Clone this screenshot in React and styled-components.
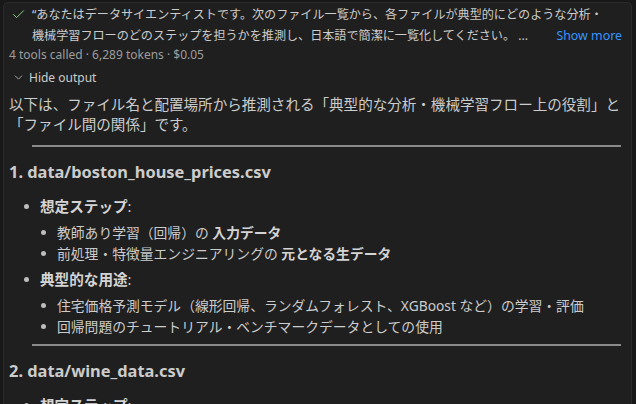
import React from 'react';
import styled, { createGlobalStyle } from 'styled-components';
import { Check, ChevronDown } from 'lucide-react';

const GlobalStyle = createGlobalStyle`
  html, body {
    margin: 0;
    padding: 0;
    background-color: #181818;
    overflow: hidden;
  }
  body {
    font-family: "Noto Sans", "Noto Sans CJK JP", sans-serif;
    color: #cccccc;
  }
`;

const Panel = styled.div`
  margin: 2px 4px 0 3px;
  height: 410px;
  box-sizing: border-box;
  background-color: #1f1f1f;
  border: 1px solid #2b2b2b;
  border-bottom: none;
  border-radius: 5px 5px 0 0;
  padding: 1px 5px 0 5px;
  overflow: clip;
`;

const PromptRow = styled.div`
  display: grid;
  grid-template-columns: 23px minmax(0, 1fr);
  align-items: start;
`;

const CheckBox = styled.div`
  height: 21px;
  display: flex;
  align-items: center;
  padding-left: 2px;
  color: #89d185;
`;

const PromptText = styled.div`
  font-size: 12.1px;
  line-height: 21px;
  color: #cccccc;
  white-space: nowrap;
  min-width: 0;
`;

const PromptLine = styled.div`
  display: flex;
  align-items: baseline;
`;

const ShowMore = styled.a`
  margin-left: auto;
  margin-right: 4px;
  color: #3794ff;
  font-size: 12.4px;
  cursor: pointer;
`;

const Meta = styled.div`
  font-size: 12px;
  line-height: 17px;
  color: #9d9d9d;
`;

const Toggle = styled.div`
  display: flex;
  align-items: center;
  gap: 4px;
  margin-top: 3px;
  height: 22px;
  font-size: 12px;
  color: #cccccc;
  padding-left: 3px;
  svg {
    color: #bbbbbb;
  }
`;

const Body = styled.div`
  padding-top: 6px;
`;

const Para = styled.p`
  margin: 0;
  font-size: 14.55px;
  line-height: 20px;
  color: #cccccc;
  white-space: nowrap;
`;

const Rule = styled.hr`
  margin: ${(p) => (p.$afterList ? '7px' : '11px')} 5px 0 23px;
  border: none;
  height: 2px;
  background-color: #8a8a8a;
`;

const Heading = styled.h2`
  margin: 13px 0 0 0;
  font-size: 16.4px;
  line-height: 24px;
  font-weight: 700;
  color: #cccccc;
`;

const List = styled.ul`
  list-style: none;
  margin: ${(p) => (p.$nested ? '5px 0 0 0' : '11px 0 0 0')};
  padding: 0 0 0 ${(p) => (p.$nested ? '17px' : '15px')};
  display: flex;
  flex-direction: column;
  gap: ${(p) => (p.$nested ? '0' : '4px')};
`;

const Item = styled.li`
  font-size: ${(p) => (p.$nested ? '13.8px' : '14.6px')};
  line-height: ${(p) => (p.$nested ? '21px' : '22px')};
  white-space: nowrap;
`;

const ItemRow = styled.div`
  display: flex;
  align-items: center;
`;

const Dot = styled.span`
  width: 5px;
  height: 5px;
  border-radius: 50%;
  background-color: #bdbdbd;
  margin-right: 11px;
  flex-shrink: 0;
`;

const Strong = styled.strong`
  font-weight: 700;
  color: #d4d4d4;
`;

function Bullet({ nested, children, sub }) {
  return (
    <Item $nested={nested}>
      <ItemRow>
        <Dot />
        <span>{children}</span>
      </ItemRow>
      {sub}
    </Item>
  );
}

export default function App() {
  return (
    <>
      <GlobalStyle />
      <Panel>
        <PromptRow>
          <CheckBox>
            <Check size={15} strokeWidth={1.6} />
          </CheckBox>
          <PromptText>
            <PromptLine>
              “あなたはデータサイエンティストです。次のファイル一覧から、各ファイルが典型的にどのような分析・
            </PromptLine>
            <PromptLine>
              機械学習フローのどのステップを担うかを推測し、日本語で簡潔に一覧化してください。&nbsp;...
              <ShowMore>Show more</ShowMore>
            </PromptLine>
          </PromptText>
        </PromptRow>
        <Meta>4 tools called · 6,289 tokens · $0.05</Meta>
        <Toggle>
          <ChevronDown size={13} strokeWidth={1.6} />
          Hide output
        </Toggle>
        <Body>
          <Para>
            以下は、ファイル名と配置場所から推測される「典型的な分析・機械学習フロー上の役割」と
            <br />
            「ファイル間の関係」です。
          </Para>
          <Rule />
          <Heading>1. data/boston_house_prices.csv</Heading>
          <List>
            <Bullet
              sub={
                <List $nested>
                  <Bullet nested>
                    教師あり学習（回帰）の <Strong>入力データ</Strong>
                  </Bullet>
                  <Bullet nested>
                    前処理・特徴量エンジニアリングの <Strong>元となる生データ</Strong>
                  </Bullet>
                </List>
              }
            >
              <Strong>想定ステップ</Strong>:
            </Bullet>
            <Bullet
              sub={
                <List $nested>
                  <Bullet nested>
                    住宅価格予測モデル（線形回帰、ランダムフォレスト、XGBoost など）の学習・評価
                  </Bullet>
                  <Bullet nested>回帰問題のチュートリアル・ベンチマークデータとしての使用</Bullet>
                </List>
              }
            >
              <Strong>典型的な用途</Strong>:
            </Bullet>
          </List>
          <Rule $afterList />
          <Heading>2. data/wine_data.csv</Heading>
          <List>
            <Bullet>
              <Strong>想定ステップ</Strong>:
            </Bullet>
          </List>
        </Body>
      </Panel>
    </>
  );
}
